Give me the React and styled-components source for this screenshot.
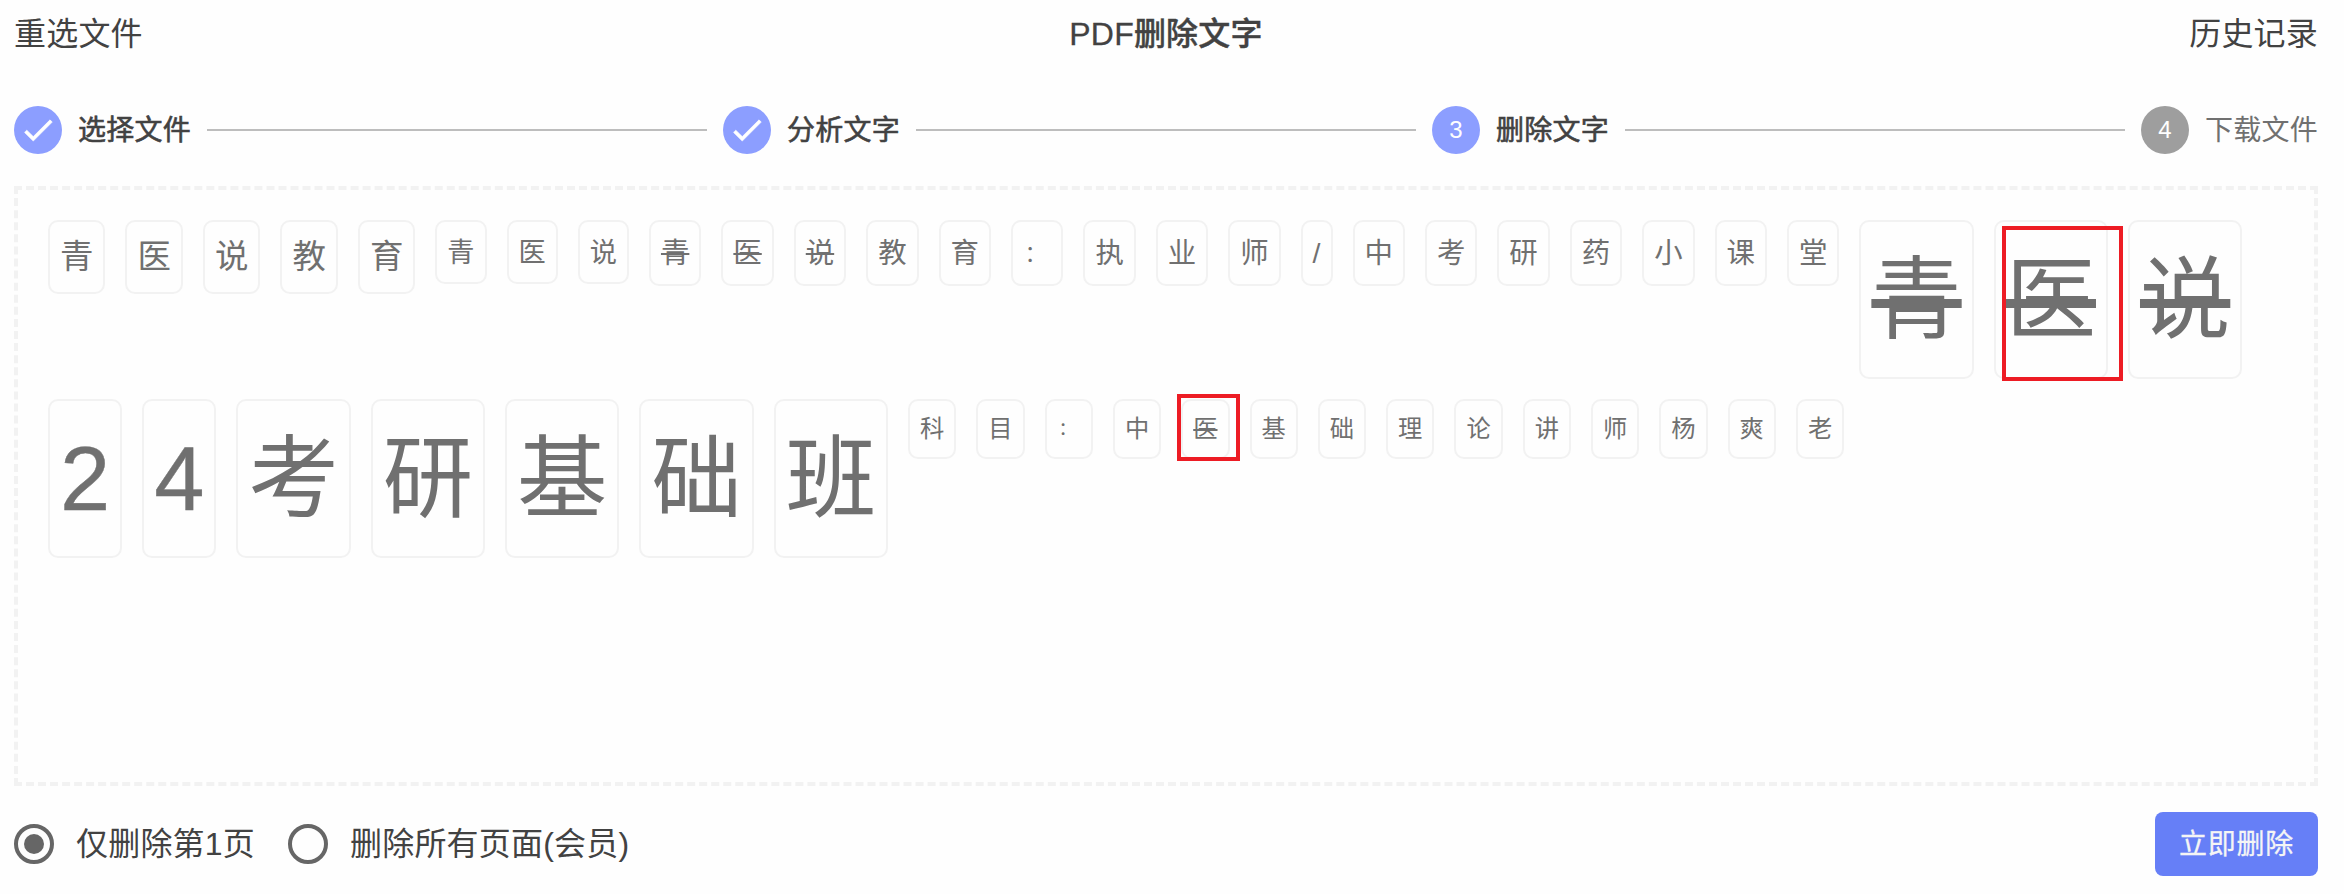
import React from "react";
import styled, { createGlobalStyle, css } from "styled-components";

const GlobalStyle = createGlobalStyle`
  *, *::before, *::after { box-sizing: border-box; }
  body {
    margin: 0;
    background: #fefefe;
    color: #424242;
    font-family: "Liberation Sans", "Noto Sans CJK SC", sans-serif;
  }
`;

const Page = styled.main`
  width: 2344px;
  height: 894px;
  padding: 10px 26px 0 14px;
  overflow: hidden;
`;

const Header = styled.header`
  display: grid;
  grid-template-columns: 1fr auto 1fr;
  height: 48px;
  font-size: 32px;
  line-height: 48px;
  letter-spacing: 0.2px;
`;

const HeaderLink = styled.a`
  justify-self: ${({ $end }) => ($end ? "end" : "start")};
`;

const Title = styled.h1`
  margin: 0;
  font-size: inherit;
  font-weight: 500;
  -webkit-text-stroke: 0.3px currentColor;
`;

const Heavier = styled.span`
  -webkit-text-stroke: 0.4px currentColor;
`;

const Stepper = styled.ol`
  display: flex;
  align-items: center;
  gap: 16px;
  height: 48px;
  margin: 48px 0 0;
  padding: 0;
  list-style: none;
`;

const Step = styled.li`
  display: flex;
  align-items: center;
  gap: 16px;
  font-size: 28px;
  line-height: 48px;
  color: ${({ $active }) => ($active ? "#424242" : "#707070")};
`;

const StepLabel = styled.span`
  padding-top: 2px;
  letter-spacing: 0.25px;
  ${({ $active }) => $active && css`-webkit-text-stroke: 0.6px currentColor;`}
`;

const StepIcon = styled.span`
  display: flex;
  align-items: center;
  justify-content: center;
  width: 48px;
  height: 48px;
  border-radius: 50%;
  background: ${({ $active }) => ($active ? "#8c9eff" : "#9e9e9e")};
  color: #fefefe;
  font-size: 24px;
`;

const StepLine = styled.li`
  flex: 1;
  height: 2px;
  background: #bdbdbd;
`;

const Canvas = styled.section`
  display: flex;
  flex-wrap: wrap;
  align-items: flex-start;
  align-content: flex-start;
  height: 600px;
  margin-top: 32px;
  padding: 20px;
  border: 4px dashed #f2f2f2;
`;

const Token = styled.span`
  position: relative;
  margin: 10px;
  padding: 0 10px;
  border: 2px solid #f2f2f2;
  border-radius: 10px;
  color: #707070;
  font-size: ${({ $size }) => $size.font}px;
  height: ${({ $size }) => $size.height}px;
  line-height: ${({ $size }) => $size.line}px;
`;

const Glyph = styled.span`
  ${({ $struck }) =>
    $struck &&
    css`
      text-decoration: line-through;
      text-decoration-thickness: round(down, 0.1em, 1px);
    `}
  ${({ $digit }) => $digit && css`-webkit-text-stroke: 0.4px currentColor;`}
  ${({ $colon }) =>
    $colon &&
    css`
      display: inline-block;
      transform: scale(0.76);
      transform-origin: 25% 52%;
    `}
`;

const Marker = styled.span`
  position: absolute;
  top: ${({ $box }) => $box[0]}px;
  left: ${({ $box }) => $box[1]}px;
  width: ${({ $box }) => $box[2]}px;
  height: ${({ $box }) => $box[3]}px;
  border: 4px solid #ed1c24;
  z-index: 1;
`;

const Footer = styled.footer`
  display: flex;
  align-items: center;
  justify-content: space-between;
  height: 64px;
  margin-top: 26px;
`;

const Options = styled.div`
  display: flex;
  gap: 33px;
`;

const Option = styled.label`
  display: flex;
  align-items: center;
  gap: 22px;
  font-size: 32px;
  line-height: 48px;
  letter-spacing: 0.2px;
`;

const Radio = styled.span`
  display: flex;
  align-items: center;
  justify-content: center;
  width: 40px;
  height: 40px;
  border: 4px solid #666;
  border-radius: 50%;

  &::after {
    content: "";
    width: 20px;
    height: 20px;
    border-radius: 50%;
    background: ${({ $checked }) => ($checked ? "#666" : "transparent")};
  }
`;

const DeleteButton = styled.button`
  height: 64px;
  padding: 2px 24px 0;
  border: 0;
  border-radius: 8px;
  background: #667ff7;
  color: #f5f5f5;
  font: 28px/62px "Liberation Sans", "Noto Sans CJK SC", sans-serif;
  letter-spacing: 0.75px;
  -webkit-text-stroke: 0.3px currentColor;
`;

const sizes = {
  heading: { font: 33.46, height: 74, line: 70 },
  caption: { font: 27.2, height: 64, line: 61 },
  text: { font: 28.42, height: 66, line: 63 },
  display: { font: 90.32, height: 159, line: 155 },
  small: { font: 24.29, height: 60, line: 56 },
};

const runs = [
  { size: "heading", text: "青医说教育" },
  { size: "caption", text: "青医说" },
  { size: "text", text: "青医说", struck: true },
  { size: "text", text: "教育：执业师/中考研药小课堂" },
  { size: "display", text: "青医说", struck: true, marked: 1, box: [4, 6, 121, 155] },
  { size: "display", text: "24考研基础班" },
  { size: "small", text: "科目：中" },
  { size: "small", text: "医", struck: true, marked: 0, box: [-7, -6, 63, 67] },
  { size: "small", text: "基础理论讲师杨爽老" },
];

const steps = ["选择文件", "分析文字", "删除文字", "下载文件"];
const current = 2;

function Check() {
  return (
    <svg width="38" height="38" viewBox="0 0 24 24" fill="#fefefe" stroke="#fefefe" strokeWidth="0.4">
      <path d="M21 7 9 19 3.5 13.5 4.91 12.09 9 16.17 19.59 5.59Z" />
    </svg>
  );
}

export default function App() {
  return (
    <Page>
      <GlobalStyle />
      <Header>
        <HeaderLink>重选文件</HeaderLink>
        <Title>PDF<Heavier>删除文字</Heavier></Title>
        <HeaderLink $end>历史记录</HeaderLink>
      </Header>
      <Stepper>
        {steps.map((label, i) => (
          <React.Fragment key={label}>
            {i > 0 && <StepLine />}
            <Step $active={i <= current}>
              <StepIcon $active={i <= current}>{i < current ? <Check /> : i + 1}</StepIcon>
              <StepLabel $active={i <= current}>{label}</StepLabel>
            </Step>
          </React.Fragment>
        ))}
      </Stepper>
      <Canvas>
        {runs.map((run, r) =>
          [...run.text].map((char, i) => (
            <Token key={`${r}-${i}`} $size={sizes[run.size]}>
              <Glyph $struck={run.struck} $digit={/\d/.test(char)} $colon={char === "："}>
                {char}
              </Glyph>
              {run.marked === i && <Marker $box={run.box} />}
            </Token>
          ))
        )}
      </Canvas>
      <Footer>
        <Options>
          <Option><Radio $checked />仅删除第1页</Option>
          <Option><Radio />删除所有页面(会员)</Option>
        </Options>
        <DeleteButton>立即删除</DeleteButton>
      </Footer>
    </Page>
  );
}
